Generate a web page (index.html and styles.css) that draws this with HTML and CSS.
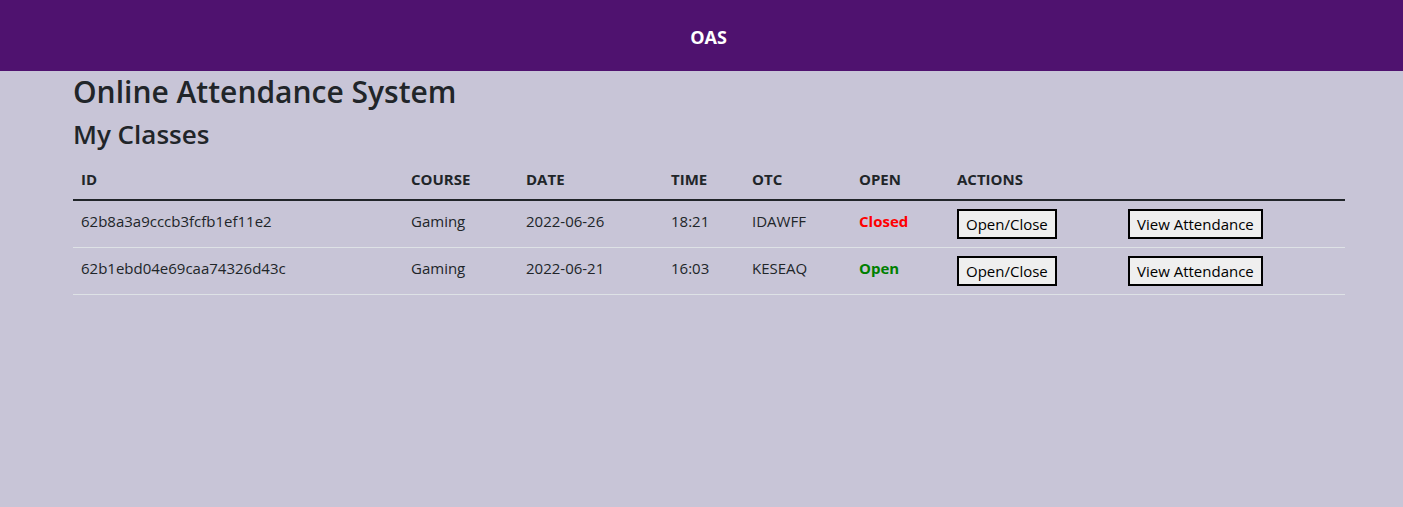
FILE: index.html
```html
<!DOCTYPE html>
<html lang="en">
<head>
<meta charset="utf-8">
<title>OAS</title>
<link rel="stylesheet" href="styles.css">
</head>
<body>
<nav class="navbar"><span class="brand">OAS</span></nav>
<main class="container">
  <h1 class="title">Online Attendance System</h1>
  <h2 class="subtitle">My Classes</h2>
  <table class="classes">
    <colgroup>
      <col class="c-id"><col class="c-course"><col class="c-date"><col class="c-time"><col class="c-otc"><col class="c-open"><col class="c-act"><col class="c-act2">
    </colgroup>
    <thead>
      <tr><th>ID</th><th>COURSE</th><th>DATE</th><th>TIME</th><th>OTC</th><th>OPEN</th><th>ACTIONS</th><th></th></tr>
    </thead>
    <tbody>
      <tr>
        <td>62b8a3a9cccb3fcfb1ef11e2</td><td>Gaming</td><td>2022-06-26</td><td>18:21</td><td>IDAWFF</td>
        <td class="status closed">Closed</td>
        <td><button class="btn">Open/Close</button></td>
        <td><button class="btn">View Attendance</button></td>
      </tr>
      <tr>
        <td>62b1ebd04e69caa74326d43c</td><td>Gaming</td><td>2022-06-21</td><td>16:03</td><td>KESEAQ</td>
        <td class="status open">Open</td>
        <td><button class="btn">Open/Close</button></td>
        <td><button class="btn">View Attendance</button></td>
      </tr>
    </tbody>
  </table>
</main>
</body>
</html>
```
FILE: styles.css
```css
* { box-sizing: border-box; }
html, body { margin: 0; padding: 0; }
body {
  background: #c8c5d7;
  color: #212529;
  font-family: "Open Sans", "Noto Sans", sans-serif;
  font-size: 15px;
  line-height: 24px;
  height: 507px;
}
.navbar {
  background: #4f126f;
  height: 71px;
  display: flex;
  align-items: center;
  justify-content: center;
  padding-left: 14px;
  padding-top: 2px;
}
.brand {
  color: #fff;
  font-weight: 700;
  font-size: 18px;
}
.container {
  padding: 0 58px 0 73px;
}
.title {
  font-size: 30px;
  font-weight: 600;
  line-height: 40px;
  margin: 1px 0 0;
}
.subtitle {
  font-size: 26px;
  font-weight: 600;
  line-height: 34px;
  margin: 5px 0 8px;
}
.classes {
  width: 100%;
  border-collapse: collapse;
  table-layout: fixed;
}
.c-id { width: 330px; }
.c-course { width: 115px; }
.c-date { width: 145px; }
.c-time { width: 81px; }
.c-otc { width: 107px; }
.c-open { width: 98px; }
.c-act { width: 171px; }
.classes th, .classes td {
  padding: 8px;
  text-align: left;
  vertical-align: top;
  white-space: nowrap;
}
.classes th {
  font-weight: 700;
  font-size: 15px;
}
.classes thead tr { border-bottom: 2px solid #212529; }
.classes tbody tr { border-bottom: 1px solid #dee2e6; }
.status { font-weight: 700; }
.closed { color: #ff0000; }
.open { color: #008000; }
.btn {
  font-family: inherit;
  font-size: 15px;
  line-height: 22px;
  color: #000;
  background: #efefef;
  border: 2px solid #000;
  padding: 2px 7px;
  margin: 0;
  height: 30px;
}
```
